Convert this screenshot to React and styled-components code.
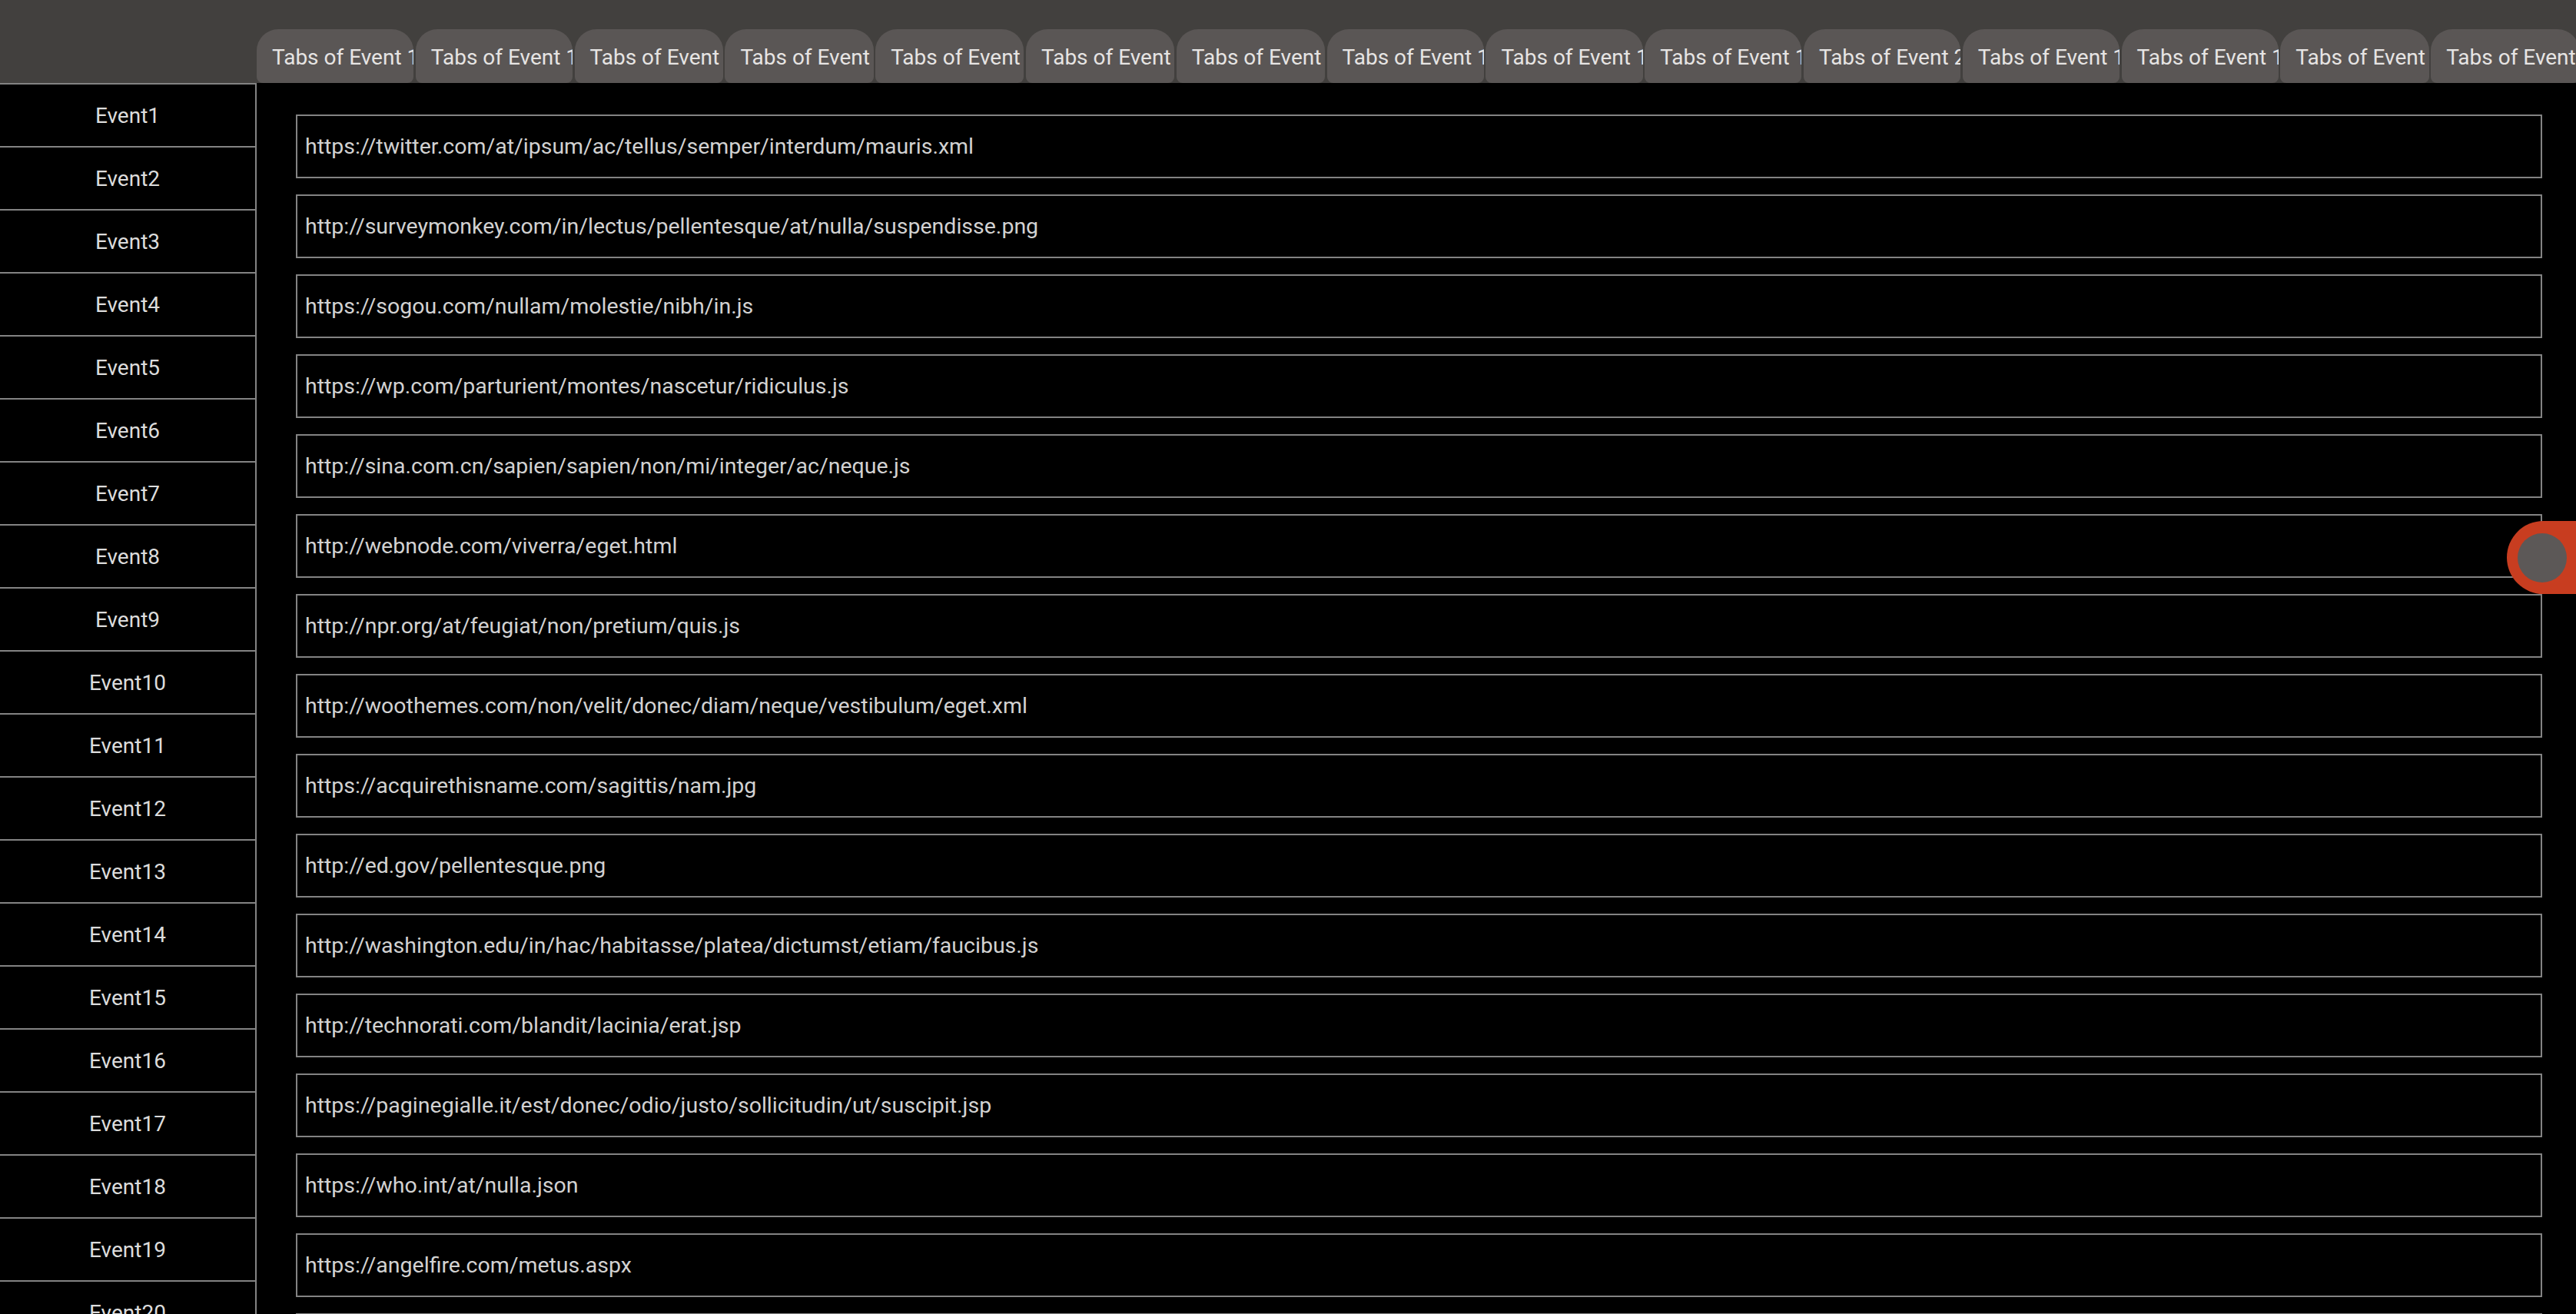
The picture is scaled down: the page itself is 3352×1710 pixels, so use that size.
import React from "react";
import styled, { createGlobalStyle } from "styled-components";

const tabs = [
  { label: "Tabs of Event 10", wide: true },
  { label: "Tabs of Event 11", wide: true },
  { label: "Tabs of Event 2" },
  { label: "Tabs of Event 3" },
  { label: "Tabs of Event 4" },
  { label: "Tabs of Event 5" },
  { label: "Tabs of Event 6" },
  { label: "Tabs of Event 12", wide: true },
  { label: "Tabs of Event 13", wide: true },
  { label: "Tabs of Event 14", wide: true },
  { label: "Tabs of Event 20", wide: true },
  { label: "Tabs of Event 15", wide: true },
  { label: "Tabs of Event 16", wide: true },
  { label: "Tabs of Event 7" },
  { label: "Tabs of Event 8" },
  { label: "Tabs of Event 9" },
];

const urls = [
  "https://twitter.com/at/ipsum/ac/tellus/semper/interdum/mauris.xml",
  "http://surveymonkey.com/in/lectus/pellentesque/at/nulla/suspendisse.png",
  "https://sogou.com/nullam/molestie/nibh/in.js",
  "https://wp.com/parturient/montes/nascetur/ridiculus.js",
  "http://sina.com.cn/sapien/sapien/non/mi/integer/ac/neque.js",
  "http://webnode.com/viverra/eget.html",
  "http://npr.org/at/feugiat/non/pretium/quis.js",
  "http://woothemes.com/non/velit/donec/diam/neque/vestibulum/eget.xml",
  "https://acquirethisname.com/sagittis/nam.jpg",
  "http://ed.gov/pellentesque.png",
  "http://washington.edu/in/hac/habitasse/platea/dictumst/etiam/faucibus.js",
  "http://technorati.com/blandit/lacinia/erat.jsp",
  "https://paginegialle.it/est/donec/odio/justo/sollicitudin/ut/suscipit.jsp",
  "https://who.int/at/nulla.json",
  "https://angelfire.com/metus.aspx",
  "http://google.ca/vestibulum/ante.html",
  "https://free.fr/lorem/ipsum.json",
];

const events = Array.from({ length: 24 }, (_, i) => `Event${i + 1}`);

const GlobalStyle = createGlobalStyle`
  html, body {
    margin: 0;
    padding: 0;
    background: #000;
    overflow: hidden;
  }
  body {
    font-family: Roboto, "Liberation Sans", sans-serif;
  }
  * {
    box-sizing: border-box;
  }
`;

const Page = styled.div`
  height: 100vh;
  display: flex;
  flex-direction: column;
  background: #000;
`;

const TabBar = styled.div`
  height: 108px;
  flex-shrink: 0;
  background: #42403e;
  display: flex;
  align-items: flex-end;
  gap: 2.5px;
  padding-left: 334px;
  overflow: hidden;
`;

const Tab = styled.div`
  flex-shrink: 0;
  width: ${(p) => (p.wide ? "204.3px" : "193.3px")};
  height: 70px;
  padding: 4px 0 0 20px;
  border-radius: 28px 28px 8px 8px;
  background: #5a5655;
  color: #e6e4e3;
  font-size: 28px;
  line-height: 66px;
  white-space: nowrap;
  overflow: hidden;
`;

const Body = styled.div`
  flex: 1;
  display: flex;
  min-height: 0;
`;

const Sidebar = styled.div`
  width: 334px;
  flex-shrink: 0;
  border-top: 2px solid #838383;
  border-right: 2px solid #838383;
  overflow: hidden;
`;

const EventRow = styled.div`
  height: 82px;
  border-bottom: 2px solid #838383;
  display: flex;
  align-items: center;
  justify-content: center;
  color: #dcdcdc;
  font-size: 28px;
`;

const Main = styled.div`
  flex: 1;
  padding: 41px 44px 0 51px;
  display: flex;
  flex-direction: column;
  gap: 21px;
  overflow: hidden;
`;

const UrlBox = styled.div`
  flex-shrink: 0;
  height: 83px;
  border: 2px solid #838383;
  padding-left: 10px;
  display: flex;
  align-items: center;
  color: #d2d2d2;
  font-size: 28.5px;
  white-space: nowrap;
`;

const Handle = styled.div`
  position: fixed;
  right: 0;
  top: 678px;
  width: 90px;
  height: 95px;
  border-radius: 48px 0 0 48px;
  background: #c83d20;
  display: flex;
  align-items: center;
  padding-left: 14px;
`;

const Knob = styled.div`
  width: 64px;
  height: 64px;
  border-radius: 50%;
  background: #5c5857;
`;

export default function App() {
  return (
    <>
      <GlobalStyle />
      <Page>
        <TabBar>
          {tabs.map((t, i) => (
            <Tab key={i} wide={t.wide}>
              {t.label}
            </Tab>
          ))}
        </TabBar>
        <Body>
          <Sidebar>
            {events.map((e) => (
              <EventRow key={e}>{e}</EventRow>
            ))}
          </Sidebar>
          <Main>
            {urls.map((u, i) => (
              <UrlBox key={i}>{u}</UrlBox>
            ))}
          </Main>
        </Body>
        <Handle>
          <Knob />
        </Handle>
      </Page>
    </>
  );
}
